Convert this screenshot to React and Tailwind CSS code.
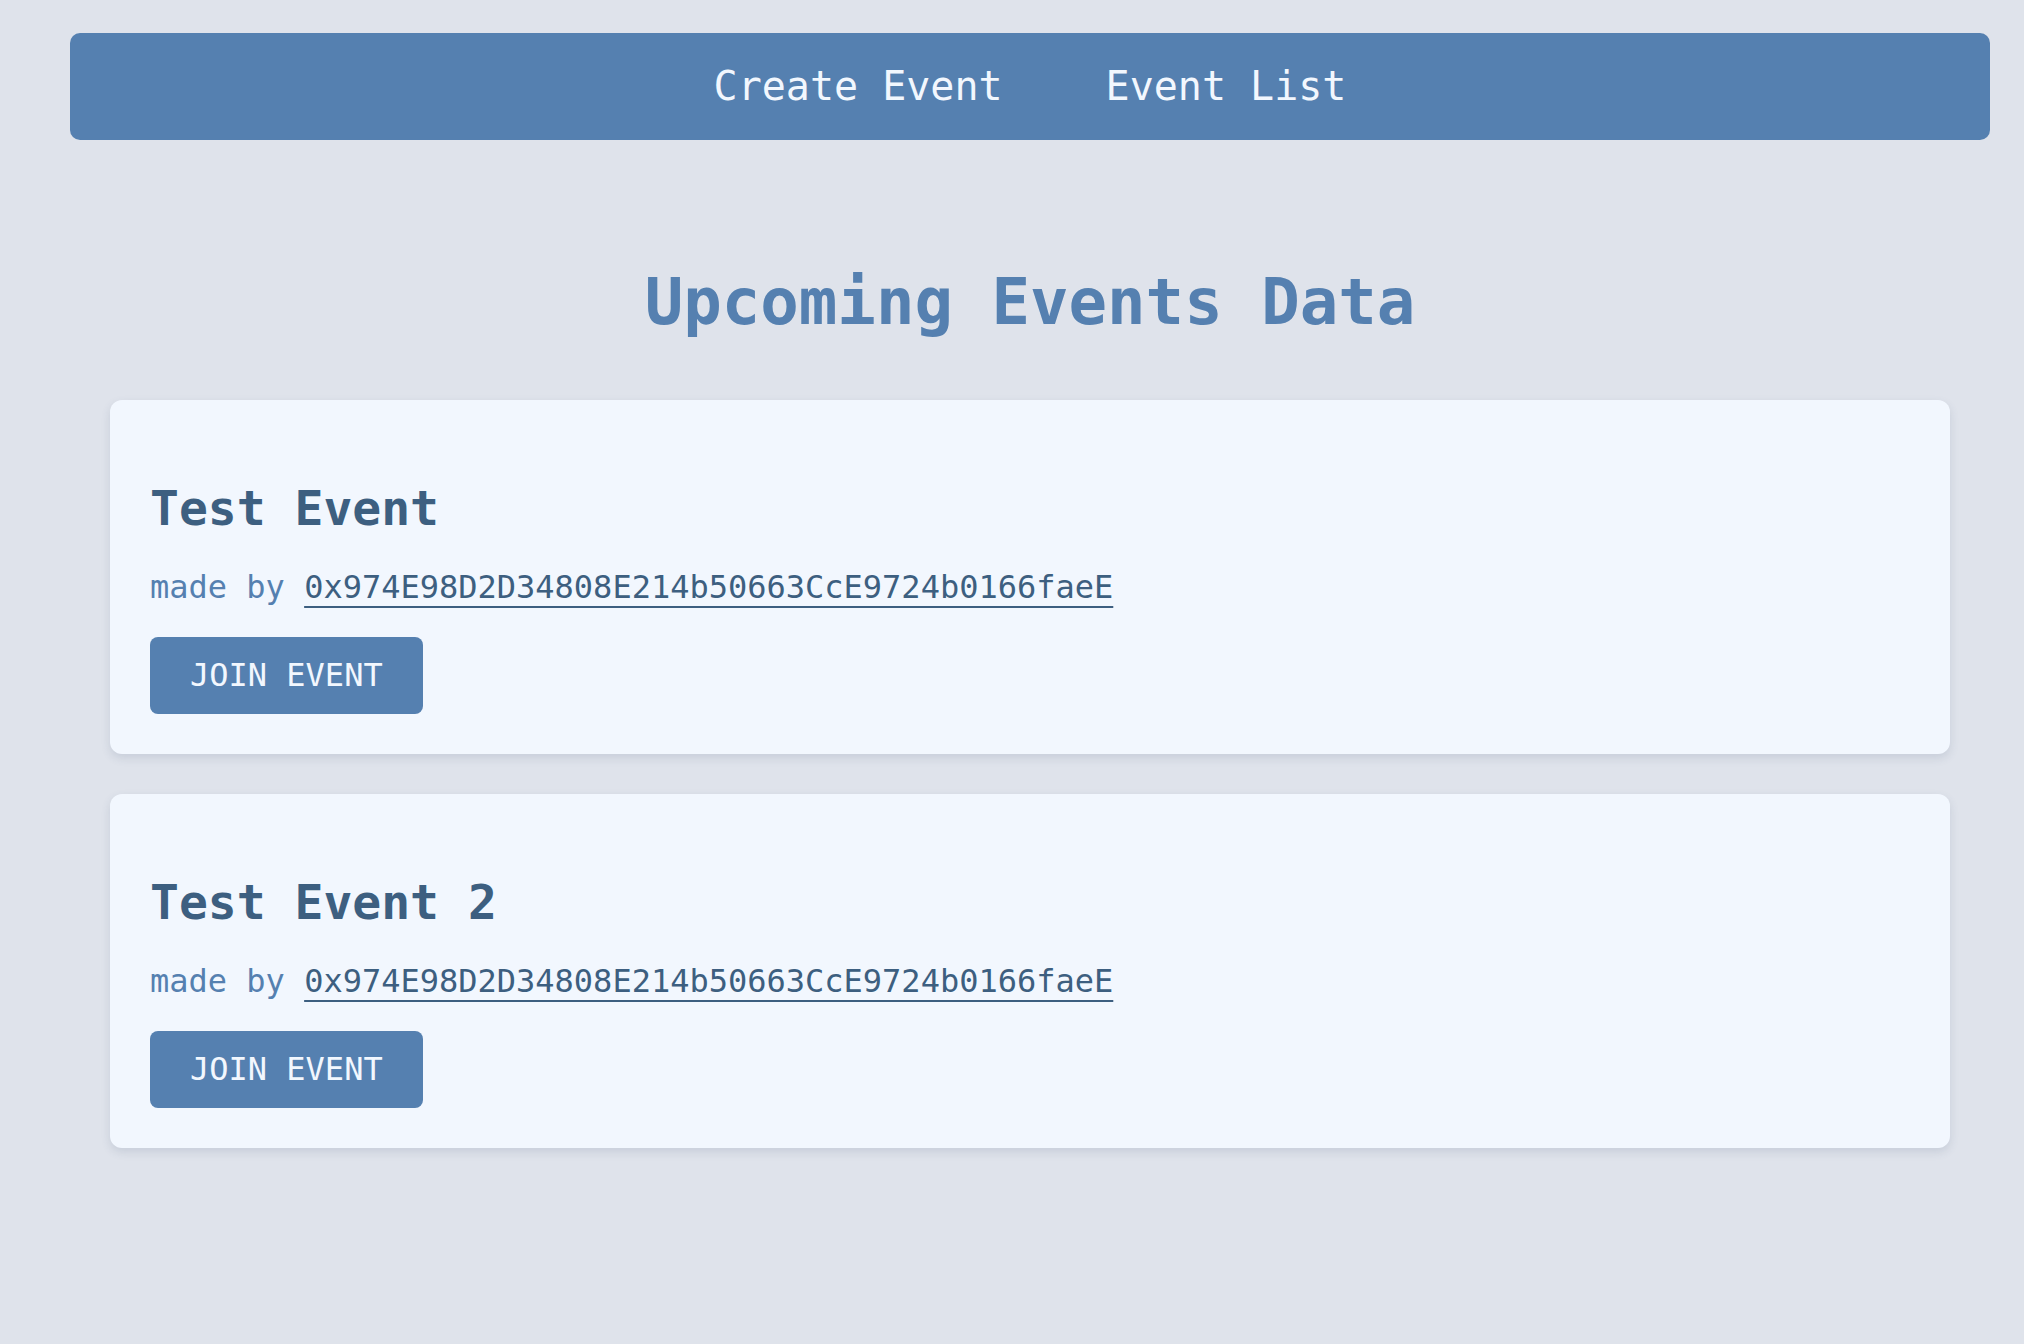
const events = [
    { title: "Test Event", owner: "0x974E98D2D34808E214b50663CcE9724b0166faeE" },
    { title: "Test Event 2", owner: "0x974E98D2D34808E214b50663CcE9724b0166faeE" },
];

const EventCard = ({ title, owner }) => {
    return (
        <div className="mx-10 rounded-xl bg-[#f2f7fe] px-10 pt-10 pb-10 shadow-[0_4px_10px_rgba(60,80,110,0.14)]">
            <h2 className="mt-10 mb-[33px] text-[48px] leading-[56px] font-bold text-[#3d5f80]">
                {title}
            </h2>
            <p className="text-[32px] leading-[37px] text-[#5580b0]">
                made by{" "}
                <a href="#" className="text-[#3d5f80] underline decoration-2 underline-offset-[8px]">
                    {owner}
                </a>
            </p>
            <button className="mt-[31px] rounded-lg bg-[#5580b0] px-10 py-5 text-[32px] leading-[37px] text-[#f2f7fe]">
                JOIN EVENT
            </button>
        </div>
    );
};

const App = () => {
    return (
        <div className="min-h-[1344px] bg-[#dfe3eb] pt-[33px] font-['DejaVu_Sans_Mono',monospace]">
            <div className="ml-[70px] w-[1920px]">
                <nav className="flex h-[107px] items-center justify-center gap-[103px] rounded-[10px] bg-[#5580b0] text-[40px] leading-[47px] text-[#f2f7fe]">
                    <a href="#">Create Event</a>
                    <a href="#">Event List</a>
                </nav>

                <h1 className="mt-[125px] mb-[61px] text-center text-[64px] leading-[74px] font-bold text-[#5580b0]">
                    Upcoming Events Data
                </h1>

                <div className="flex flex-col gap-10">
                    {
                        events.map((ev, i) => {
                            return <EventCard key={i} title={ev.title} owner={ev.owner} />
                        })
                    }
                </div>
            </div>
        </div>
    );
};

export default App;
